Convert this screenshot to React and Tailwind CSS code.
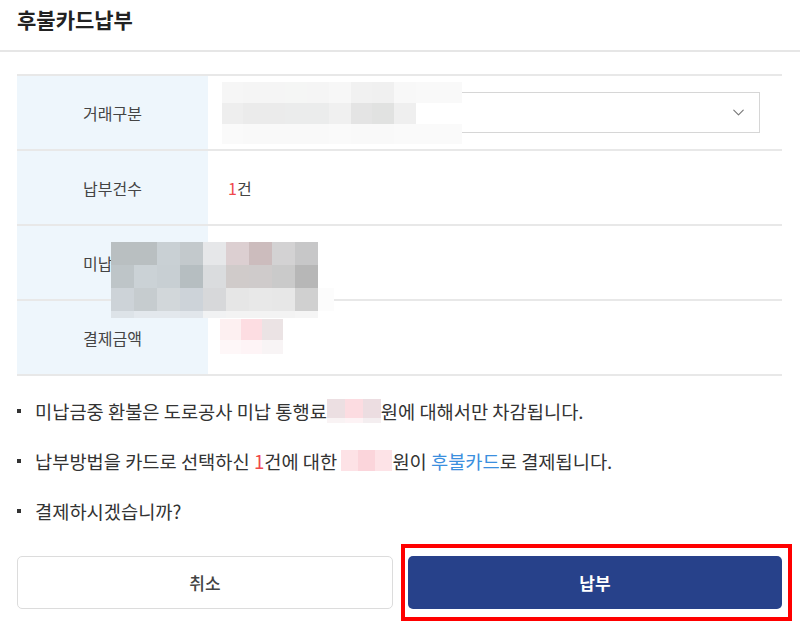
import React from "react";
import { ChevronDown } from "lucide-react";

function Mosaic({ cols, rows, className }) {
  return (
    <div className={"flex flex-col pointer-events-none " + (className || "")}>
      {rows.map((r, i) => (
        <div key={i} className="flex" style={{ height: r.h }}>
          {r.colors.map((c, j) => (
            <div key={j} style={{ width: cols[j], backgroundColor: c }} />
          ))}
        </div>
      ))}
    </div>
  );
}

const m1cols = [21, 21, 21, 22, 22, 22, 21, 22, 22, 22, 24];
const m1rows = [
  { h: 21, colors: ["#f6f6f6", "#f5f5f5", "#f5f5f5", "#f5f6f5", "#f5f5f5", "#f7f7f7", "#f1f1f1", "#f0f0f0", "#f8f8f8", "#f9f9f9", "#f9f9f9"] },
  { h: 21, colors: ["#eeeeee", "#ebebeb", "#ebebeb", "#ebecec", "#ebecec", "#f0f0f0", "#e4e4e4", "#e1e2e1", "#efefef", "transparent", "transparent"] },
  { h: 20, colors: ["#fafafa", "#f9f9f9", "#f9f9f9", "#f9f9f9", "#f9f9f9", "#fafafa", "#f9f9f9", "#f9f9f9", "#fafafa", "#fafafa", "#fafafa"] },
];

const m2cols = [23, 23, 23, 23, 23, 23, 23, 23, 23, 16];
const m2rows = [
  { h: 23, colors: ["#b9bfc1", "#b9bfc1", "#c9d0d4", "#c3c9cc", "#e6e7e9", "#dccfd1", "#ccbcbd", "#d3d2d3", "#c7c7c8", "transparent"] },
  { h: 23, colors: ["#bec5c8", "#cbd2d6", "#c8cfd3", "#b6bec1", "#dadcde", "#d0cbca", "#cfcbcb", "#cacaca", "#b7b7b7", "transparent"] },
  { h: 23, colors: ["#cdd3d8", "#c6cccf", "#d2d7da", "#cdd3d9", "#d7d8da", "#e6e6e6", "#e8e8e8", "#e7e7e7", "#d0d0d0", "#fcfcfc"] },
  { h: 7, colors: ["#dde3e8", "#e3e8ed", "#e3e8ed", "#e1e6eb", "#f1f2f3", "#f3f3f3", "#f3f3f3", "#f3f3f3", "#f5f5f5", "transparent"] },
];

const m3cols = [21, 21, 21];
const m3rows = [
  { h: 21, colors: ["#fdf0f1", "#fddde2", "#ebe3e4"] },
  { h: 14, colors: ["#fef7f8", "#fef4f6", "#f8f4f5"] },
];

const t1cols = [18, 18, 18];
const t1rows = [
  { h: 19, colors: ["#ecdfe2", "#fcdce1", "#ecdde1"] },
  { h: 5, colors: ["#f9f3f4", "#fdf3f5", "#f4eef0"] },
];

const t2cols = [17, 17, 17];
const t2rows = [
  { h: 21, colors: ["#fde2e6", "#fbd5db", "#fde3e7"] },
];

function Row({ label, children }) {
  return (
    <div className="flex h-[75px] border-b-2 border-[#e8e8e8]">
      <div className="w-[191px] shrink-0 bg-[#eef6fc] flex items-center justify-center text-[16px] text-[#444]">
        {label}
      </div>
      <div className="flex-1 flex items-center relative">{children}</div>
    </div>
  );
}

export default function App() {
  return (
    <div className="w-[800px] h-[633px] bg-white overflow-hidden text-[#333] font-['Noto_Sans_CJK_KR','Noto_Sans',sans-serif]">
      <div className="h-[52px] border-b-2 border-[#e6e6e6] pl-[17px] pt-[9px]">
        <h1 className="text-[21px] leading-[21px] font-semibold text-[#222]">후불카드납부</h1>
      </div>

      <div className="pl-[17px] pr-[18px]">
        <div className="mt-[22px] border-t-2 border-[#e8e8e8] relative">
          <Row label="거래구분">
            <div className="ml-[14px] w-[538px] h-[41px] border border-[#d6d6d6] flex items-center justify-end pr-[11px]">
              <ChevronDown size={19} strokeWidth={1.4} className="text-[#777]" />
            </div>
            <Mosaic cols={m1cols} rows={m1rows} className="absolute left-[14px] top-[6px]" />
          </Row>
          <Row label="납부건수">
            <span className="ml-[20px] text-[16px] text-[#444]">
              <span className="text-[#f0484c]">1</span>건
            </span>
          </Row>
          <Row label="미납금액">
            <span />
          </Row>
          <Row label="결제금액">
            <Mosaic cols={m3cols} rows={m3rows} className="absolute left-[12px] top-[18px]" />
          </Row>
          <Mosaic cols={m2cols} rows={m2rows} className="absolute left-[94px] top-[166px]" />
        </div>

        <ul className="mt-[10px] text-[18.7px] text-[#333]">
          <li className="h-[50px] flex items-center">
            <span className="w-[4px] h-[4px] bg-[#333] mr-[14px] shrink-0" />
            <span className="flex items-center whitespace-nowrap">
              미납금중 환불은 도로공사 미납 통행료
              <Mosaic cols={t1cols} rows={t1rows} className="inline-flex" />
              원에 대해서만 차감됩니다.
            </span>
          </li>
          <li className="h-[50px] flex items-center">
            <span className="w-[4px] h-[4px] bg-[#333] mr-[14px] shrink-0" />
            <span className="flex items-center whitespace-nowrap">
              납부방법을 카드로 선택하신&nbsp;<span className="text-[#f0484c]">1</span>건에 대한&nbsp;
              <Mosaic cols={t2cols} rows={t2rows} className="inline-flex" />
              원이&nbsp;<span className="text-[#3b8fde]">후불카드</span>로 결제됩니다.
            </span>
          </li>
          <li className="h-[50px] flex items-center">
            <span className="w-[4px] h-[4px] bg-[#333] mr-[14px] shrink-0" />
            <span>결제하시겠습니까?</span>
          </li>
        </ul>

        <div className="mt-[20px] flex gap-[15px]">
          <button className="flex-1 h-[53px] border border-[#dcdcdc] rounded-[5px] bg-white text-[17px] font-medium text-[#444]">
            취소
          </button>
          <div className="flex-1 relative">
            <button className="w-full h-[53px] rounded-[5px] bg-[#27418a] text-[17px] font-semibold text-white">
              납부
            </button>
            <div className="absolute left-[-7px] right-[-10px] top-[-12px] bottom-[-12px] border-4 border-[#ff0000] pointer-events-none" />
          </div>
        </div>
      </div>
    </div>
  );
}
